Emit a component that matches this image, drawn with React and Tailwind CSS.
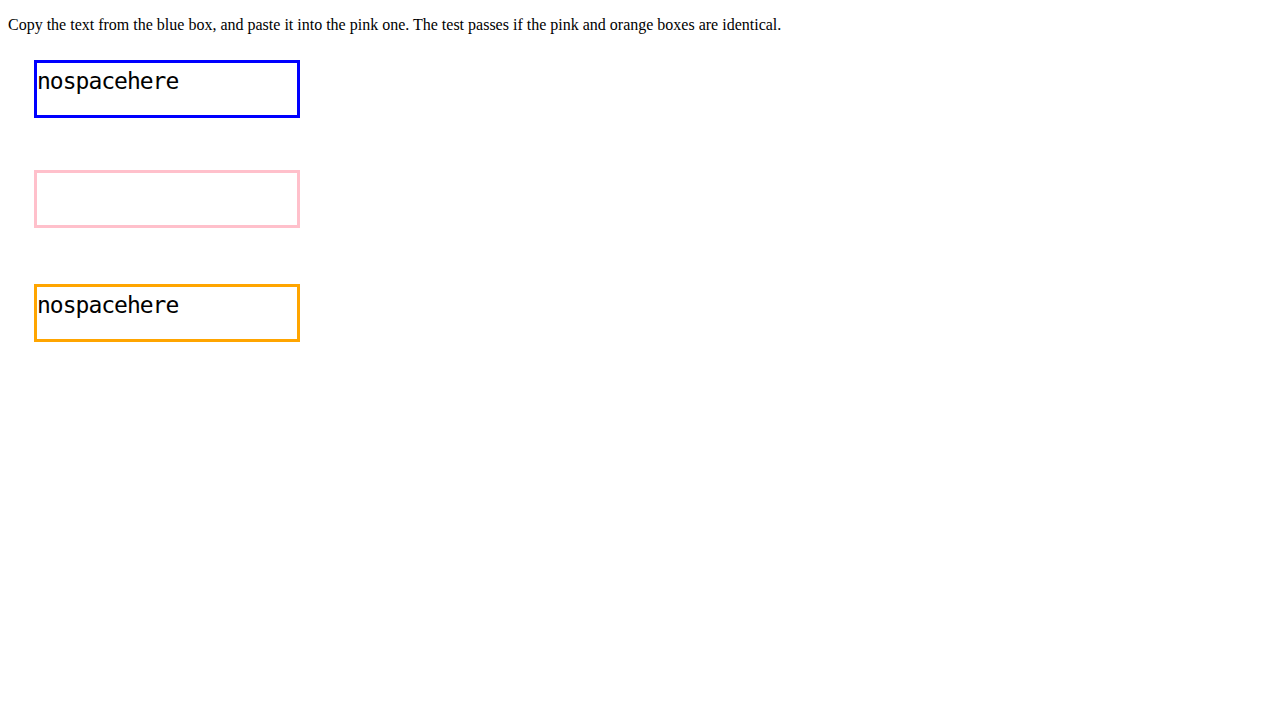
import React from 'react';

const mono = { fontFamily: '"DejaVu Sans Mono", monospace' };

function Box({ color, text, className = '' }) {
  return (
    <div
      className={`w-[266px] h-[58px] border-[3px] ${color} text-[23px] leading-[36px] tracking-[-1px] text-black ${className}`}
      style={mono}
    >
      {text}
    </div>
  );
}

export default function App() {
  return (
    <div className="bg-white min-h-[720px] px-2 pt-4 text-black font-['Liberation_Serif',serif]">
      <p className="text-base leading-[18px]">
        Copy the text from the blue box, and paste it into the pink one. The test passes if the pink and orange boxes are identical.
      </p>
      <div className="ml-[26px]">
        <Box color="border-[#0000ff]" text="nospacehere" className="mt-[26px]" />
        <Box color="border-[#ffc0cb]" text="" className="mt-[52px]" />
        <Box color="border-[#ffa500]" text="nospacehere" className="mt-[56px]" />
      </div>
    </div>
  );
}
